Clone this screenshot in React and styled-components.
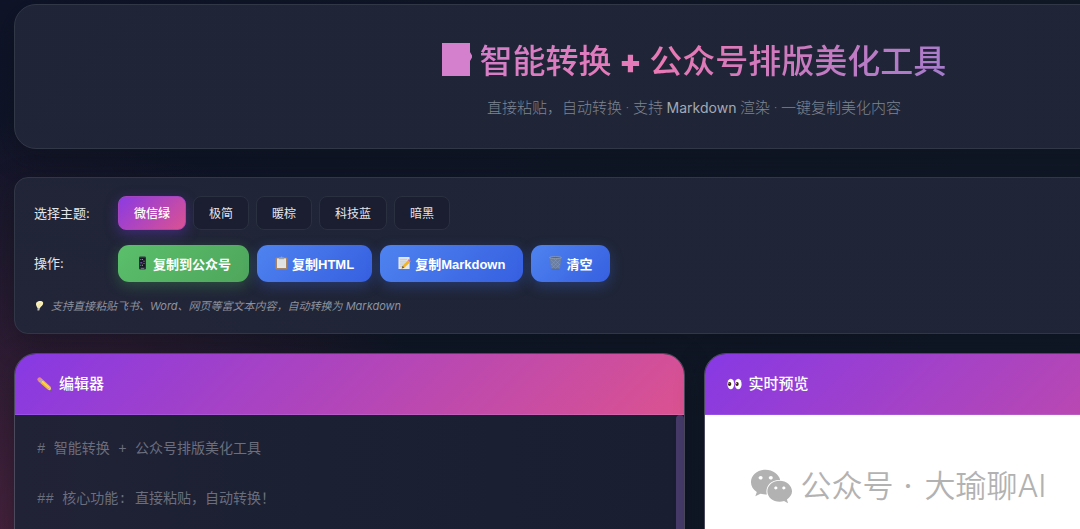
import * as React from 'react';
import styled, { createGlobalStyle, css } from 'styled-components';
import { FaWeixin } from 'react-icons/fa';

const GlobalStyle = createGlobalStyle`
  * {
    box-sizing: border-box;
  }

  body {
    margin: 0;
    background: #0f172a;
    color: #e2e5ec;
    font-family: Inter, "Noto Sans CJK SC", sans-serif;
  }

  button, textarea {
    font-family: inherit;
  }
`;

const Page = styled.div`
  height: 100vh;
  overflow: hidden;
  padding: 4px 14px 0;
  background:
    radial-gradient(circle 480px at 0 600px, rgba(190, 60, 110, 0.36), transparent),
    linear-gradient(135deg, #0f1428 0%, #111827 60%, #111a2b 100%);
`;

const Container = styled.div`
  min-width: 1360px;
`;

const glass = css`
  background: linear-gradient(135deg, rgba(33, 38, 56, 0.9), rgba(33, 39, 57, 0.9));
  border: 1px solid #323747;
  box-shadow: 0 8px 28px rgba(10, 14, 20, 0.4);
`;

const Header = styled.header`
  ${glass}
  margin-bottom: 28px;
  padding: 30px 28px;
  border-radius: 22px;
  text-align: center;
`;

const Title = styled.h1`
  display: flex;
  align-items: center;
  justify-content: center;
  gap: 8px;
  margin: 0 0 13px;
  background: linear-gradient(135deg, #a78bfa 0%, #e879b5 48%, #487eec 100%);
  background-clip: text;
  -webkit-background-clip: text;
  color: transparent;
  font-family: "Noto Sans CJK SC", sans-serif;
  font-size: 33px;
  font-weight: 500;
  line-height: 48px;
`;

const Plus = styled.span`
  font-family: Inter, sans-serif;
  font-weight: 900;
`;

const Subtitle = styled.p`
  margin: 0;
  color: #7d8492;
  font-family: Roboto, "Noto Sans CJK SC", sans-serif;
  font-size: 15px;
  font-weight: 300;
  line-height: 20px;
`;

const Latin = styled.span`
  color: #a4a9b5;
  font-family: Inter, sans-serif;
  font-size: 14px;
  font-weight: 400;
`;

const Controls = styled.section`
  ${glass}
  display: flex;
  flex-direction: column;
  gap: 15px;
  margin-bottom: 19px;
  padding: 18px 19px;
  border-radius: 14px;
`;

const ControlRow = styled.div`
  display: flex;
  align-items: center;
`;

const ControlLabel = styled.span`
  width: 84px;
  padding-bottom: 2px;
  font-size: 13px;
  font-weight: 400;
`;

const ButtonGroup = styled.div`
  display: flex;
  gap: ${({ $gap }) => $gap}px;
`;

const ThemeButton = styled.button`
  height: 34px;
  padding: 0 15px 2px;
  border: 1px solid ${({ $active }) => ($active ? '#a445c0' : '#2b3041')};
  border-radius: 8px;
  background: ${({ $active }) => ($active ? 'linear-gradient(135deg, #8a3ae4, #dc5290)' : '#1a1e30')};
  box-shadow: ${({ $active }) => ($active ? '0 4px 14px rgba(124, 58, 237, 0.35)' : 'none')};
  background-origin: border-box;
  color: ${({ $active }) => ($active ? '#fff' : '#e2e5ec')};
  font-size: 12px;
  font-weight: ${({ $active }) => ($active ? 500 : 400)};
  cursor: pointer;
`;

const ActionButton = styled.button`
  display: flex;
  align-items: center;
  gap: 4px;
  height: 37px;
  padding: 0 18px 1px;
  border: 0;
  border-radius: 11px;
  background: ${({ $green }) => ($green
    ? 'linear-gradient(135deg, #5abf6b, #4fa65c)'
    : 'linear-gradient(135deg, #4f83f0, #365fe0)')};
  box-shadow: 0 4px 14px ${({ $green }) => ($green ? 'rgba(74, 180, 90, 0.3)' : 'rgba(59, 110, 240, 0.3)')};
  color: #fff;
  font-family: "Liberation Sans", "Noto Sans CJK SC", sans-serif;
  font-size: 13px;
  font-weight: 600;
  cursor: pointer;
`;

const Hint = styled.p`
  display: flex;
  align-items: center;
  gap: 5px;
  margin: 0;
  color: #8d929f;
  font-size: 11px;
  font-style: italic;
  line-height: 18px;
`;

const Workspace = styled.main`
  display: grid;
  grid-template-columns: 1fr 1fr;
  gap: 19px;
`;

const Panel = styled.section`
  ${glass}
  display: flex;
  flex-direction: column;
  height: 600px;
  overflow: hidden;
  border-color: #4a4a5c;
  border-radius: 22px;
`;

const PanelHeader = styled.div`
  display: flex;
  align-items: center;
  gap: 7px;
  height: 61px;
  padding: 0 22px;
  border-bottom: 1px solid rgba(255, 255, 255, 0.12);
  background: linear-gradient(135deg, #8739e4, #db5290);
`;

const PanelTitle = styled.h2`
  margin: 0;
  color: #fff;
  font-size: 15px;
  font-weight: 500;
  line-height: 20px;
`;

const EditorBody = styled.div`
  display: flex;
  flex: 1;
  background: linear-gradient(90deg, #212235, #1b2033 45%, #191e31);
`;

const Editor = styled.textarea`
  flex: 1;
  padding: 22px;
  border: 0;
  outline: 0;
  resize: none;
  overflow: hidden;
  background: transparent;
  color: #e2e5ec;
  font-family: "Liberation Mono", "Noto Sans CJK SC", monospace;
  font-size: 14px;
  line-height: 25px;

  &::placeholder {
    color: #6b6e7c;
    opacity: 1;
  }
`;

const ScrollThumb = styled.div`
  width: 8px;
  border-radius: 4px;
  background: #453a68;
`;

const Preview = styled.div`
  flex: 1;
  padding: 48px 45px;
  background: #fff;
`;

const Account = styled.div`
  display: flex;
  align-items: center;
  color: #b2b2b2;
  font-size: 31px;
  font-weight: 350;
  line-height: 46px;
`;

const AccountLabel = styled.span`
  margin-left: 8px;
`;

const Dot = styled.span`
  margin: 0 12px 0 10px;
  font-weight: 400;
`;

const NoteSilhouette = () => (
  <svg width="30" height="34" viewBox="0 0 30 34" aria-hidden="true">
    <path d="M0 0H28V9L30.5 13.5L28 18V33H0Z" fill="#d580cd" />
  </svg>
);

const PhoneIcon = () => (
  <svg width="13" height="14" viewBox="0 0 13 14" aria-hidden="true">
    <rect x="3" y="0.5" width="7" height="13" rx="1.2" fill="#303641" />
    <rect x="3.8" y="2" width="5.4" height="9.4" fill="#171827" />
    <path d="M4.3 3h1v1h-1zM7.5 7h1v1h-1z" fill="#d96868" />
    <path d="M6 3h1v1H6zM4.3 8.8h1v1h-1z" fill="#49a7d8" />
    <path d="M7.5 4.8h1v1h-1zM6 8.8h1v1H6z" fill="#bba74e" />
    <path d="M4.3 6h2v1.5h-2z" fill="#7547a7" />
    <path d="M5 12.4h3" stroke="#8a9490" strokeWidth="0.7" />
  </svg>
);

const ClipboardIcon = () => (
  <svg width="13" height="14" viewBox="0 0 13 14" aria-hidden="true">
    <rect x="0.5" y="1.5" width="12" height="12" rx="0.8" fill="#a58468" />
    <rect x="2" y="2.4" width="9" height="9.6" fill="#e4e4e6" />
    <path d="M3 5h7M3 7h7M3 9h7" stroke="#d8dade" strokeWidth="0.6" />
    <path d="M4 1.4h1.6a.9.9 0 0 1 1.8 0H9v1.9H4z" fill="#9ba4ad" />
  </svg>
);

const MemoIcon = () => (
  <svg width="13" height="14" viewBox="0 0 14 14" aria-hidden="true">
    <rect x="0.5" y="0.5" width="12" height="13" rx="0.6" fill="#e5e8ec" />
    <path d="M2 3h8M2 5h7M2 7h6M2 9h4M2 11h4" stroke="#b2b8c2" strokeWidth="0.7" />
    <path d="M10.5 4L13 6.3L6.8 12.2L4 13L5 10Z" fill="#eeb52c" />
    <path d="M10.5 4L11.8 2.8L14 5.2L13 6.3Z" fill="#df7183" />
    <path d="M4 13L5 10L6.8 12.2Z" fill="#765c46" />
  </svg>
);

const TrashIcon = () => (
  <svg width="13" height="14" viewBox="0 0 13 14" aria-hidden="true">
    <path d="M0.6 1.5H12.4L10.9 13.4H2.1Z" fill="#718096" fillOpacity="0.85" />
    <path d="M2 4L10.5 12M4.5 2.5L11 9M2.5 8L7 13M11 4L3 12M8.5 2.5L2.4 9M11 8L6 13" stroke="#939eae" strokeWidth="0.4" />
    <ellipse cx="6.5" cy="1.6" rx="6" ry="1" fill="#566276" stroke="#a3adb7" strokeWidth="0.6" />
    <path d="M2.3 13.1H10.7" stroke="#56647c" strokeWidth="0.8" />
  </svg>
);

const BulbIcon = () => (
  <svg width="12" height="12" viewBox="0 0 12 12" aria-hidden="true">
    <path d="M3.5 8C2 5.6 1.6 4.2 2.4 2.6C3.6 .4 9 .2 9.2 2.9C9.3 5 7 6.2 6 8Z" fill="#f8efba" />
    <path d="M4.7 7.7L5.2 4.5L7.1 3.7" fill="none" stroke="#e8d48a" strokeWidth="0.6" />
    <path d="M3.6 8H6L5.2 10.6H3.4Z" fill="#b9bbb4" />
  </svg>
);

const PencilIcon = () => (
  <svg width="15" height="15" viewBox="0 0 15 15" aria-hidden="true">
    <path d="M0.3 2.9C0 1.6 1.8 0 3.2.3L5 1.9L2 5Z" fill="#e68793" />
    <path d="M1.6 4.6L4.6 1.5L6.2 2.9L3.2 6Z" fill="#aab0b7" />
    <path d="M3.2 6L6.2 2.9L13.6 9.8L10.7 12.6Z" fill="#f2b92d" />
    <path d="M4.9 4.3L12.4 11.1" stroke="#ffdc5f" strokeWidth="1.2" />
    <path d="M10.7 12.6L13.6 9.8L14.6 13.9Z" fill="#e8c795" />
    <path d="M12.9 13.3L14.2 12.2L14.7 14Z" fill="#333" />
  </svg>
);

const EyesIcon = () => (
  <svg width="15" height="14" viewBox="0 0 15 14" aria-hidden="true">
    <ellipse cx="3.8" cy="7" rx="3.4" ry="5.2" fill="#fff" />
    <ellipse cx="11.2" cy="7" rx="3.4" ry="5.2" fill="#fff" />
    <ellipse cx="2.6" cy="7.1" rx="1.7" ry="2" fill="#3a2110" />
    <ellipse cx="10" cy="7.1" rx="1.7" ry="2" fill="#3a2110" />
    <circle cx="2" cy="6.3" r="0.5" fill="#fff" />
    <circle cx="9.4" cy="6.3" r="0.5" fill="#fff" />
  </svg>
);

const themes = ['微信绿', '极简', '暖棕', '科技蓝', '暗黑'];

const actions = [
  { label: '复制到公众号', Icon: PhoneIcon, green: true },
  { label: '复制HTML', Icon: ClipboardIcon },
  { label: '复制Markdown', Icon: MemoIcon },
  { label: '清空', Icon: TrashIcon },
];

const placeholder = `# 智能转换 + 公众号排版美化工具

## 核心功能: 直接粘贴，自动转换！`;

const App = () => {
  const [theme, setTheme] = React.useState(themes[0]);
  const [text, setText] = React.useState('');

  return (
    <Page>
      <GlobalStyle />
      <Container>
        <Header>
          <Title>
            <NoteSilhouette />
            <span>智能转换 <Plus>+</Plus> 公众号排版美化工具</span>
          </Title>
          <Subtitle>
            直接粘贴，自动转换 · 支持 <Latin>Markdown</Latin> 渲染 · 一键复制美化内容
          </Subtitle>
        </Header>

        <Controls>
          <ControlRow>
            <ControlLabel id="theme-label">选择主题:</ControlLabel>
            <ButtonGroup role="group" aria-labelledby="theme-label" $gap={7}>
              {themes.map((name) => (
                <ThemeButton key={name} $active={name === theme} onClick={() => setTheme(name)}>
                  {name}
                </ThemeButton>
              ))}
            </ButtonGroup>
          </ControlRow>
          <ControlRow>
            <ControlLabel id="action-label">操作:</ControlLabel>
            <ButtonGroup role="group" aria-labelledby="action-label" $gap={8}>
              {actions.map(({ label, Icon, green }) => (
                <ActionButton key={label} $green={green} onClick={label === '清空' ? () => setText('') : undefined}>
                  <Icon />
                  {label}
                </ActionButton>
              ))}
            </ButtonGroup>
          </ControlRow>
          <Hint>
            <BulbIcon />
            支持直接粘贴飞书、Word、网页等富文本内容，自动转换为 Markdown
          </Hint>
        </Controls>

        <Workspace>
          <Panel>
            <PanelHeader>
              <PencilIcon />
              <PanelTitle id="editor-title">编辑器</PanelTitle>
            </PanelHeader>
            <EditorBody>
              <Editor
                aria-labelledby="editor-title"
                placeholder={placeholder}
                value={text}
                onChange={(e) => setText(e.target.value)}
              />
              <ScrollThumb />
            </EditorBody>
          </Panel>
          <Panel>
            <PanelHeader>
              <EyesIcon />
              <PanelTitle>实时预览</PanelTitle>
            </PanelHeader>
            <Preview>
              <Account>
                <FaWeixin size={43} />
                <AccountLabel>公众号</AccountLabel>
                <Dot>·</Dot>
                大瑜聊AI
              </Account>
            </Preview>
          </Panel>
        </Workspace>
      </Container>
    </Page>
  );
};

export default App;
